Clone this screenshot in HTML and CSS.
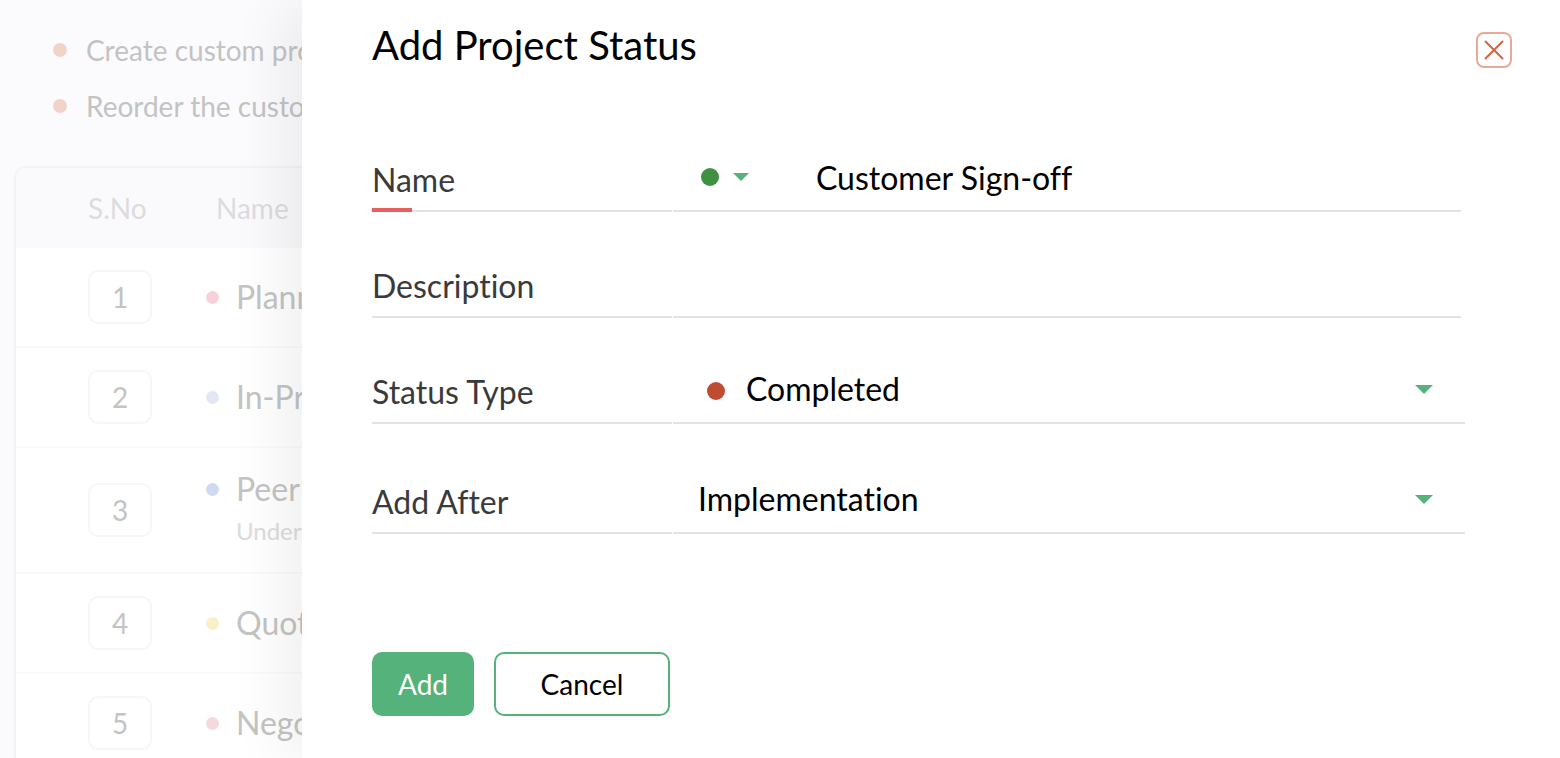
FILE: index.html

```html
<!DOCTYPE html>
<html lang="en">
<head>
  <meta charset="UTF-8">
  <title>Add Project Status</title>
  <link rel="stylesheet" href="styles.css">
</head>
<body>

<div class="page">
  <ul class="notes">
    <li>Create custom project statuses</li>
    <li>Reorder the custom statuses</li>
  </ul>
  <div class="table">
    <div class="table-head">
      <span class="col-sno">S.No</span>
      <span class="col-name">Name</span>
    </div>
    <div class="row row-1">
      <span class="num">1</span>
      <i class="dot dot-pink"></i>
      <span class="row-name">Planning</span>
    </div>
    <div class="row row-2">
      <span class="num">2</span>
      <i class="dot dot-grey"></i>
      <span class="row-name">In-Progress</span>
    </div>
    <div class="row row-3">
      <span class="num">3</span>
      <i class="dot dot-blue"></i>
      <div>
        <span class="row-name">Peer Review</span>
        <p class="row-sub">Under review</p>
      </div>
    </div>
    <div class="row row-4">
      <span class="num">4</span>
      <i class="dot dot-yellow"></i>
      <span class="row-name">Quotation</span>
    </div>
    <div class="row row-5">
      <span class="num">5</span>
      <i class="dot dot-rose"></i>
      <span class="row-name">Negotiation</span>
    </div>
  </div>
</div>

<div class="drawer">
  <div class="drawer-head">
    <h1>Add Project Status</h1>
    <button class="close" aria-label="Close">
      <svg width="20" height="20" viewBox="0 0 20 20"><path d="M1.5 1.5 L18.5 18.5 M18.5 1.5 L1.5 18.5" stroke="#d4623f" stroke-width="1.9" stroke-linecap="round" fill="none"/></svg>
    </button>
  </div>

  <div class="field field-name">
    <label class="required">Name</label>
    <div class="value">
      <i class="pick-dot"></i>
      <i class="caret caret-small"></i>
      <span class="name-text">Customer Sign-off</span>
    </div>
  </div>
  <div class="field field-desc">
    <label>Description</label>
    <div class="value"></div>
  </div>
  <div class="field field-type">
    <label>Status Type</label>
    <div class="value wide">
      <i class="type-dot"></i>
      <span>Completed</span>
      <i class="caret"></i>
    </div>
  </div>
  <div class="field field-after">
    <label>Add After</label>
    <div class="value wide">
      <span>Implementation</span>
      <i class="caret"></i>
    </div>
  </div>

  <div class="actions">
    <button class="btn btn-add">Add</button>
    <button class="btn btn-cancel">Cancel</button>
  </div>
</div>

</body>
</html>
```

FILE: styles.css

```css
* { box-sizing: border-box; }
html, body { height: 100%; }
body { margin: 0; font-family: Lato, "Open Sans", sans-serif; font-variant-ligatures: none; background: #fbfbfe; overflow: hidden; }

/* page behind the drawer, all washed out */
.page { height: 758px; padding: 22px 0 0 14px; color: #c3c3c3; }
.notes { list-style: none; margin: 0 0 32px; padding: 0 0 0 39px; font-size: 28px; }
.notes li { height: 56px; line-height: 56px; position: relative; padding-left: 33px; white-space: nowrap; }
.notes li::before { content: ""; position: absolute; left: 0; top: 21px; width: 14px; height: 14px; border-radius: 50%; background: #f2d3c8; }

.table { width: 1500px; background: #fff; border: 2px solid #f3f3f5; border-bottom: 0; border-radius: 12px 12px 0 0; overflow: hidden; }
.table-head { height: 80px; background: #fafafc; display: flex; align-items: center; padding-left: 72px; font-size: 28px; color: #dcdcde; }
.col-sno { width: 128px; }
.row { display: flex; align-items: center; padding-left: 72px; border-bottom: 2px solid #fafafa; font-size: 32px; }
.row-1 { height: 100px; }
.row-2 { height: 100px; }
.row-3 { height: 126px; }
.row-4 { height: 100px; }
.row-5 { height: 100px; }
.num { width: 64px; height: 54px; border: 2px solid #f6f6f6; border-radius: 10px; display: flex; align-items: center; justify-content: center; font-size: 28px; margin-right: 54px; }
.dot { width: 13px; height: 13px; border-radius: 50%; margin-right: 17px; flex: none; }
.dot-pink { background: #f9cfdc; }
.dot-grey { background: #e3e7f4; }
.dot-blue { background: #cfdaf0; }
.dot-yellow { background: #faf0c8; }
.dot-rose { background: #f3dade; }
.row-3 { align-items: flex-start; padding-top: 16px; }
.row-3 .num { margin-top: 19px; }
.row-3 .dot { margin-top: 19px; }
.row-name { line-height: 50px; white-space: nowrap; }
.row-sub { margin: 0; font-size: 24px; color: #dcdcdc; line-height: 34px; white-space: nowrap; }

/* drawer */
.drawer { position: absolute; left: 302px; top: 0; width: 1258px; height: 758px; background: #fff; padding: 0 0 0 70px; box-shadow: -22px 0 50px rgba(0,0,0,0.06); color: #000; }
.drawer-head { display: flex; justify-content: space-between; height: 92px; padding-right: 48px; }
.drawer-head h1 { margin: 22px 0 0; font-size: 40px; font-weight: 400; line-height: 46px; }
.close { width: 36px; height: 36px; margin-top: 32px; padding: 0; background: #fff; border: 2px solid #e8a998; border-radius: 8px; display: flex; align-items: center; justify-content: center; }

.field { display: flex; align-items: stretch; }
.field label { width: 300px; border-bottom: 2px solid #e2e2e2; color: #3a3a3a; font-size: 32px; position: relative; line-height: 30px; }
.field label.required::after { content: ""; position: absolute; left: 0; bottom: -2px; width: 40px; height: 4px; background: #e85f5f; }
.value { margin-left: 1px; width: 788px; border-bottom: 2px solid #e2e2e2; display: flex; align-items: center; font-size: 32px; line-height: 38px; position: relative; }
.value.wide { width: 792px; padding-left: 25px; padding-bottom: 21px; }
.field-name { height: 47px; margin-top: 73px; }
.field-desc { height: 47px; margin-top: 59px; }
.field-type { height: 47px; margin-top: 59px; }
.field-after { height: 47px; margin-top: 63px; }

.pick-dot { width: 18px; height: 18px; border-radius: 50%; background: #3f9142; margin-left: 28px; margin-bottom: 22px; }
.caret { width: 0; height: 0; border-left: 9px solid transparent; border-right: 9px solid transparent; border-top: 9px solid #54b27a; position: absolute; right: 32px; top: 8px; }
.caret-small { position: static; border-left-width: 8px; border-right-width: 8px; border-top-width: 8px; margin-left: 14px; margin-bottom: 22px; }
.name-text { margin-left: 67px; margin-bottom: 20px; }
.type-dot { width: 18px; height: 18px; border-radius: 50%; background: #bf4b33; margin: 3px 21px 0 9px; }

.actions { display: flex; gap: 20px; margin-top: 118px; }
.btn { height: 64px; border-radius: 10px; font-family: inherit; font-size: 28px; padding: 0; }
.btn-add { width: 102px; background: #54b27a; border: 0; color: #fff; }
.btn-cancel { width: 176px; background: #fff; border: 2px solid #54b27a; color: #000; }
```
